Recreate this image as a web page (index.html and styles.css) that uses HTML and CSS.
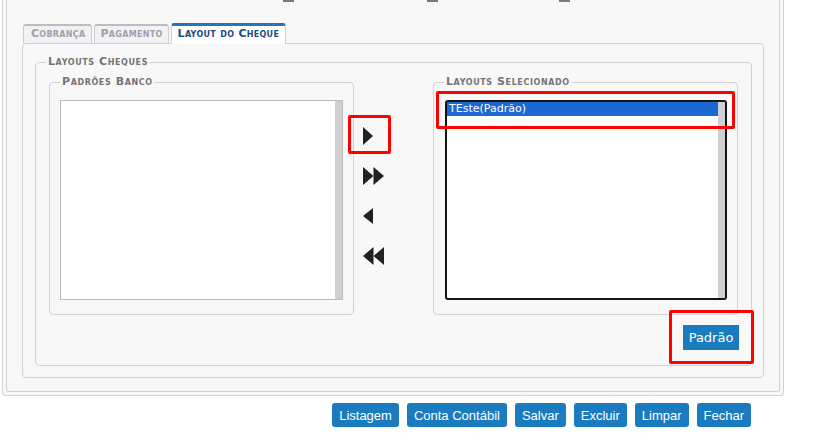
FILE: index.html
```html
<!DOCTYPE html>
<html lang="pt-BR">
<head>
    <meta charset="UTF-8">
    <title>Layout do Cheque</title>
    <link rel="stylesheet" href="styles.css">
</head>
<body>
    <div class="frame">
        <div class="frame-inner">
            <div class="cut-marks"><span></span><span></span><span></span></div>

            <div class="tabs">
                <div class="tab">Cobrança</div>
                <div class="tab">Pagamento</div>
                <div class="tab active">Layout do Cheque</div>
            </div>

            <div class="tab-panel">
                <fieldset class="group">
                    <legend>Layouts Cheques</legend>
                    <div class="transfer">
                        <fieldset class="box">
                            <legend>Padrões Banco</legend>
                            <div class="listbox">
                                <div class="list-items"></div>
                                <div class="scroll"></div>
                            </div>
                        </fieldset>

                        <div class="moves">
                            <svg width="22" height="20" viewBox="0 0 22 20"><polygon points="0,1 10,10 0,19" /></svg>
                            <svg width="22" height="20" viewBox="0 0 22 20"><polygon points="0,1 10.5,10 0,19" /><polygon points="10.5,1 21,10 10.5,19" /></svg>
                            <svg width="22" height="20" viewBox="0 0 22 20"><polygon points="10,2 0,10 10,18" /></svg>
                            <svg width="22" height="20" viewBox="0 0 22 20"><polygon points="10.5,1 0,10 10.5,19" /><polygon points="21,1 10.5,10 21,19" /></svg>
                        </div>

                        <fieldset class="box">
                            <legend>Layouts Selecionado</legend>
                            <div class="listbox dark">
                                <div class="list-items">
                                    <div class="item selected">TEste(Padrão)</div>
                                </div>
                                <div class="scroll"></div>
                            </div>
                        </fieldset>
                    </div>
                    <div class="default-row">
                        <button class="btn-default">Padrão</button>
                    </div>
                </fieldset>
            </div>
        </div>
    </div>

    <div class="actions">
        <button class="btn">Listagem</button>
        <button class="btn">Conta Contábil</button>
        <button class="btn">Salvar</button>
        <button class="btn">Excluir</button>
        <button class="btn">Limpar</button>
        <button class="btn">Fechar</button>
    </div>

    <!-- highlight marks drawn over the screen -->
    <div class="mark mark-arrow"></div>
    <div class="mark mark-item"></div>
    <div class="mark mark-default"></div>
</body>
</html>
```

FILE: styles.css
```css
:root {
    --panel-bg: #f8f8f8;
    --line: #d2d2d2;
    --legend: #747474;
    --btn-blue: #1b7bbf;
    --mark: #ff0000;
}

* {
    box-sizing: border-box;
}

body {
    margin: 0;
    background: #ffffff;
    font-family: "DejaVu Sans", Verdana, sans-serif;
    position: relative;
    width: 814px;
    height: 446px;
    overflow: hidden;
}

.frame {
    margin-left: 2px;
    width: 782px;
    background: var(--panel-bg);
    border: 1px solid var(--line);
    border-top: none;
    border-radius: 0 0 4px 4px;
    padding: 0 3px 3px;
}

.frame-inner {
    border: 1px solid var(--line);
    border-top: none;
    border-radius: 0 0 3px 3px;
    padding: 0 15px 13px 15px;
}

.cut-marks {
    height: 2px;
    position: relative;
}

.cut-marks span {
    position: absolute;
    top: 0;
    width: 11px;
    height: 2px;
    background: #7a7a7a;
}

.cut-marks span:nth-child(1) { left: 261px; }
.cut-marks span:nth-child(2) { left: 405px; }
.cut-marks span:nth-child(3) { left: 537px; }

/* tabs */
.tabs {
    display: flex;
    align-items: flex-end;
    gap: 2px;
    margin-top: 21px;
    padding-left: 1px;
    height: 20px;
}

.tab {
    height: 19px;
    border: 1px solid #cfcfcf;
    border-top: 2px solid #bdbdbd;
    border-bottom: none;
    border-radius: 3px 3px 0 0;
    background: #f1f1f6;
    color: #a0a0a6;
    font-size: 11px;
    font-weight: bold;
    font-variant: small-caps;
    letter-spacing: 0.3px;
    line-height: 14px;
    padding: 1px 5px 0 5px;
    white-space: nowrap;
}

.tab:first-child {
    padding: 1px 6px 0 7px;
}

.tab.active {
    position: relative;
    height: 21px;
    margin-bottom: -1px;
    border-top: 3px solid #2a74b5;
    background: #ffffff;
    color: #1d4d7c;
    padding: 1px 6px 0 6px;
}

.tab-panel {
    border: 1px solid var(--line);
    border-radius: 4px;
    background: var(--panel-bg);
    padding: 12px 11px 11px 12px;
}

/* fieldsets */
fieldset {
    margin: 0;
    min-width: 0;
    border: 1px solid var(--line);
    border-radius: 4px;
}

legend {
    color: var(--legend);
    font-size: 11px;
    font-weight: bold;
    font-variant: small-caps;
    letter-spacing: 0.6px;
    line-height: 12px;
    padding: 0 2px;
}

.group {
    padding: 8px 11px 15px 13px;
}

.group > legend {
    margin-left: -3px;
}

.transfer {
    display: flex;
}

.box {
    width: 305px;
    padding: 12px 10px 14px 10px;
}

.box > legend {
    margin-left: 0;
}

.listbox {
    display: flex;
    height: 200px;
    background: #ffffff;
    border: 1px solid #bdbdbd;
}

.listbox .list-items {
    flex: 1;
    padding: 1px;
}

.listbox .scroll {
    width: 7px;
    background: #cfcfd4;
}

.listbox.dark {
    border: 2px solid #151515;
    border-radius: 3px;
    margin-left: 1px;
}

.listbox.dark .list-items {
    padding: 0;
}

.item {
    height: 14px;
    line-height: 14px;
    font-size: 11px;
    padding-left: 2px;
    color: #222;
}

.item.selected {
    background: #1c68d2;
    color: #ffffff;
}

.moves {
    width: 79px;
    display: flex;
    flex-direction: column;
    gap: 20px;
    padding: 50px 0 0 9px;
}

.moves svg {
    display: block;
    fill: #222222;
}

.default-row {
    display: flex;
    justify-content: flex-end;
    padding-right: 1px;
    margin-top: 10px;
}

.btn-default {
    width: 56px;
    height: 25px;
    border: none;
    border-radius: 0;
    background: var(--btn-blue);
    color: #ffffff;
    font-family: "DejaVu Sans", Verdana, sans-serif;
    font-size: 13px;
    padding: 0;
}

/* bottom buttons */
.actions {
    display: flex;
    justify-content: flex-end;
    gap: 8px;
    margin-top: 7px;
    padding-right: 63px;
}

.btn {
    height: 24px;
    border: none;
    border-radius: 3px;
    background: var(--btn-blue);
    color: #ffffff;
    font-family: "Liberation Sans", Arial, sans-serif;
    font-size: 13px;
    padding: 0 7px;
}

/* red highlight marks */
.mark {
    position: absolute;
    border: 3px solid var(--mark);
    border-radius: 2px;
}

.mark-arrow {
    left: 348px;
    top: 115px;
    width: 43px;
    height: 39px;
}

.mark-item {
    left: 436px;
    top: 91px;
    width: 299px;
    height: 38px;
}

.mark-default {
    left: 669px;
    top: 310px;
    width: 85px;
    height: 54px;
}
```
